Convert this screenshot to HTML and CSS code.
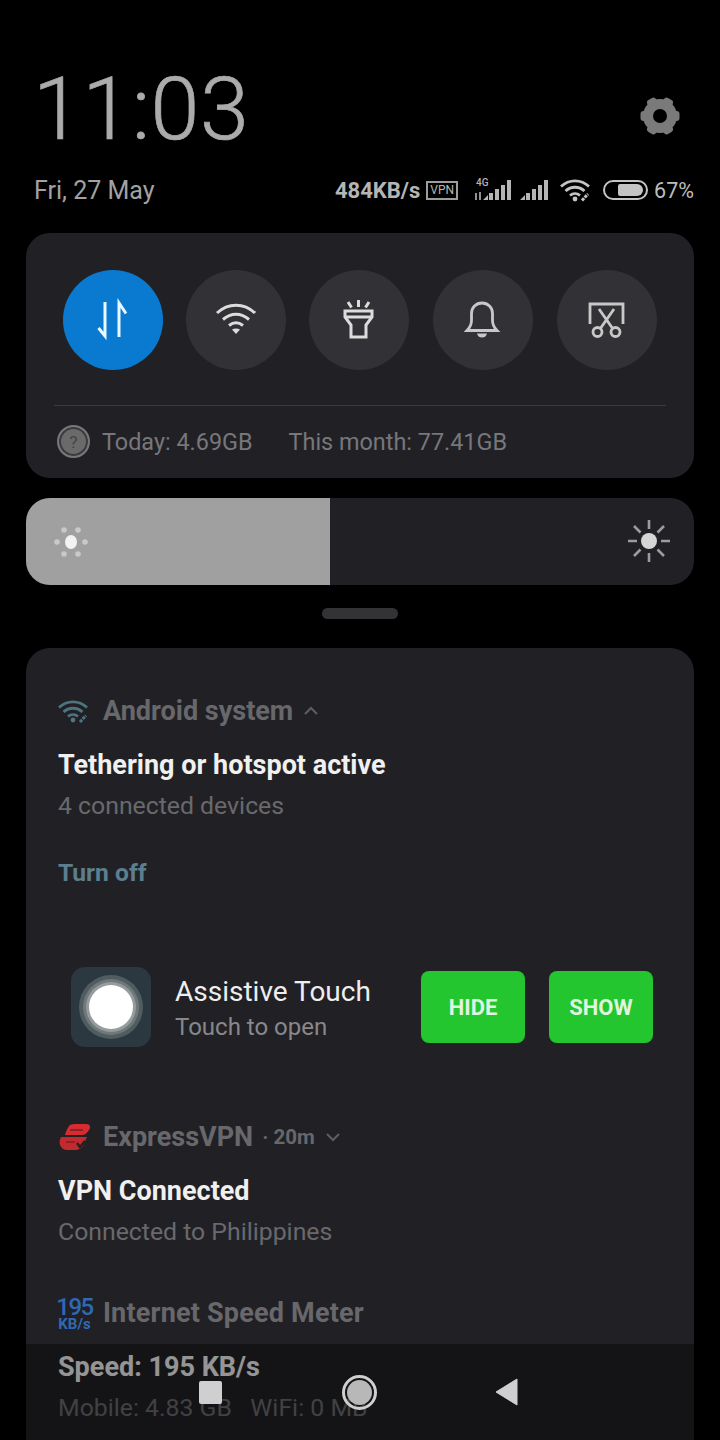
FILE: index.html
```html
<!DOCTYPE html>
<html lang="en">
<head>
    <meta charset="UTF-8">
    <meta name="viewport" content="width=device-width, initial-scale=1.0">
    <title>Notification shade</title>
    <link rel="stylesheet" href="styles.css">
</head>
<body>
    <div class="screen">
        <header class="top">
            <div class="clock-row">
                <div class="clock">11:03</div>
                <svg class="gear" viewBox="0 0 40 40">
                    <circle cx="20" cy="20" r="12.5" fill="none" stroke="#7a7a7a" stroke-width="9"/>
                    <g fill="#7a7a7a">
                        <rect x="15" y="0.500" width="10" height="39" rx="3" transform="rotate(30 20 20)"/>
                        <rect x="15" y="0.500" width="10" height="39" rx="3" transform="rotate(90 20 20)"/>
                        <rect x="15" y="0.500" width="10" height="39" rx="3" transform="rotate(150 20 20)"/>
                    </g>
                    <circle cx="20" cy="20" r="7" fill="#000"/>
                </svg>
            </div>
            <div class="status-row">
                <span class="date">Fri, 27 May</span>
                <div class="status">
                    <span class="speed">484KB/s</span>
                    <span class="vpn">VPN</span>
                    <svg class="signal first" width="38" height="24" viewBox="0 0 38 24">
                        <text x="2" y="8" class="tiny">4G</text>
                        <path d="M2 15v7M6 14v8" stroke="#b5b5b5" stroke-width="1.600"/>
                        <path d="M9 22l5-5v5zM15 22v-7h4v7zM21 22v-11h4v11zM27 22v-15h4v15zM33 22v-20h4v20z" fill="#b5b5b5"/>
                    </svg>
                    <svg class="signal" width="29" height="24" viewBox="0 0 29 24">
                        <path d="M0 22l5-5v5zM6 22v-7h4v7zM12 22v-11h4v11zM18 22v-15h4v15zM24 22v-20h4v20z" fill="#b5b5b5"/>
                    </svg>
                    <svg class="wifi-small" width="32" height="24" viewBox="0 0 32 24">
                        <g fill="none" stroke="#c4c4c4" stroke-width="2.800">
                            <path d="M1 8.500c8-7.500 20-7.500 28 0"/>
                            <path d="M5.500 13c5.500-5 13.500-5 19 0"/>
                            <path d="M10 17.500c3-2.500 7-2.500 10 0"/>
                        </g>
                        <circle cx="15" cy="21" r="2.400" fill="#c4c4c4"/>
                        <path d="M22 22l5-5.500" stroke="#000" stroke-width="5"/>
                        <path d="M22 22.500l6-6.500" stroke="#c4c4c4" stroke-width="3" stroke-dasharray="3 1"/>
                    </svg>
                    <div class="battery"><div class="battery-fill"></div></div>
                    <span class="percent">67%</span>
                </div>
            </div>
        </header>

        <section class="card quick">
            <div class="toggles">
                <div class="toggle on">
                    <svg width="44" height="44" viewBox="0 0 44 44" fill="none" stroke="#e8f8ff" stroke-width="3">
                        <path d="M14 4v34l-6.500-8"/>
                        <path d="M28 39v-34l7 10.500"/>
                    </svg>
                </div>
                <div class="toggle">
                    <svg width="44" height="44" viewBox="0 0 44 44" fill="none" stroke="#dcdcdc" stroke-width="3">
                        <path d="M3 15c11-10.500 27-10.500 38 0"/>
                        <path d="M9 21.500c8-7 18-7 26 0"/>
                        <path d="M15 27.500c4.500-3.500 9.500-3.500 14 0"/>
                        <path d="M22 36l-4-4.500c2.500-1.500 5.500-1.500 8 0z" fill="#dcdcdc" stroke="none"/>
                    </svg>
                </div>
                <div class="toggle">
                    <svg width="44" height="44" viewBox="0 0 44 44" fill="none" stroke="#dcdcdc" stroke-width="3">
                        <path d="M8 13h27v6l-6 8v12h-15v-12l-6-8z"/>
                        <path d="M8 19h27"/>
                        <path d="M21.500 2v7M11 4l3.500 5.500M32 4l-3.500 5.500"/>
                    </svg>
                </div>
                <div class="toggle">
                    <svg width="44" height="44" viewBox="0 0 44 44" fill="none" stroke="#c8c8c8" stroke-width="2.800">
                        <path d="M6 32.500c3-3 4.500-5.500 4.500-10v-7c0-6 4.500-10.500 10.500-10.500s10.500 4.500 10.500 10.500v7c0 4.500 1.500 7 4.500 10z"/>
                        <path d="M16 35.500h10c-1 3-2.500 4-5 4s-4-1-5-4z" fill="#c8c8c8" stroke="none"/>
                    </svg>
                </div>
                <div class="toggle">
                    <svg width="44" height="44" viewBox="0 0 44 44" fill="none" stroke="#c8c8c8" stroke-width="2.800">
                        <path d="M5 26v-20h33v20"/>
                        <path d="M14 11l14 20M29 11l-14 20"/>
                        <circle cx="12.500" cy="34" r="4.500"/>
                        <circle cx="30.500" cy="34" r="4.500"/>
                    </svg>
                </div>
            </div>
            <div class="usage">
                <span class="help"><span class="help-mark">?</span></span>
                <span class="today">Today: 4.69GB</span>
                <span>This month: 77.41GB</span>
            </div>
        </section>

        <section class="brightness">
            <div class="brightness-fill">
                <svg width="36" height="36" viewBox="0 0 36 36">
                    <ellipse cx="18" cy="18" rx="6" ry="7" fill="#f2f2f2"/>
                    <g fill="#c9c9c9">
                        <circle cx="11" cy="6" r="2.800"/><circle cx="25" cy="6" r="2.800"/>
                        <circle cx="4" cy="18" r="2.800"/><circle cx="32" cy="18" r="2.800"/>
                        <circle cx="11" cy="30" r="2.800"/><circle cx="25" cy="30" r="2.800"/>
                    </g>
                </svg>
            </div>
            <svg class="sun" width="44" height="44" viewBox="0 0 44 44">
                <circle cx="22" cy="22" r="8" fill="#d5d5d5"/>
                <path d="M22 1v9M22 34v9M1 22h9M34 22h9M7 7l6.500 6.500M30.500 30.500l6.500 6.500M37 7l-6.500 6.500M13.500 30.500l-6.500 6.500" stroke="#9c9c9c" stroke-width="2.600"/>
            </svg>
        </section>

        <div class="handle"></div>

        <section class="card notes">
            <div class="note">
                <div class="app-row">
                    <svg class="app-icon" width="32" height="24" viewBox="0 0 32 24">
                        <g fill="none" stroke="#4d7480" stroke-width="2.800">
                            <path d="M1 8.500c8-7.500 20-7.500 28 0"/>
                            <path d="M5.500 13c5.500-5 13.500-5 19 0"/>
                            <path d="M10 17.500c3-2.500 7-2.500 10 0"/>
                        </g>
                        <circle cx="15" cy="21" r="2.400" fill="#4d7480"/>
                        <path d="M22 23l6-6.500" stroke="#4d7480" stroke-width="3" stroke-dasharray="3 1"/>
                    </svg>
                    <span class="app-name">Android system</span>
                    <svg class="chevron" width="16" height="10" viewBox="0 0 16 10" fill="none" stroke="#5e5e62" stroke-width="2"><path d="M2 8l6-6 6 6"/></svg>
                </div>
                <div class="note-title">Tethering or hotspot active</div>
                <div class="note-text">4 connected devices</div>
                <div class="note-action">Turn off</div>
            </div>

            <div class="assist">
                <div class="assist-icon"><div class="assist-dot"></div></div>
                <div class="assist-text">
                    <div class="assist-title">Assistive Touch</div>
                    <div class="assist-sub">Touch to open</div>
                </div>
                <div class="btn">HIDE</div>
                <div class="btn">SHOW</div>
            </div>

            <div class="note vpn-note">
                <div class="app-row">
                    <svg class="app-icon express" width="33" height="28" viewBox="0 0 33 28">
                        <path d="M12 2c2-1 4-1 6-1h10c4 0 5 3 3 6s-4 5-7 5h-17c1-4 3-8 5-10z" fill="#d42c31"/>
                        <path d="M3 14h26l-3 7c-1 3-4 5-7 6h-10c-3 0-6-2-7-5s0-6 1-8z" fill="#c22a2e"/>
                        <path d="M12 7h13" stroke="#8f2226" stroke-width="2"/>
                        <path d="M8 19h9" stroke="#8f2226" stroke-width="2"/>
                        <path d="M19 20l3 4 5-6" fill="none" stroke="#212125" stroke-width="2.400"/>
                    </svg>
                    <span class="app-name">ExpressVPN</span>
                    <span class="app-time">· 20m</span>
                    <svg class="chevron" width="16" height="10" viewBox="0 0 16 10" fill="none" stroke="#5e5e62" stroke-width="2"><path d="M2 2l6 6 6-6"/></svg>
                </div>
                <div class="note-title">VPN Connected</div>
                <div class="note-text">Connected to Philippines</div>
            </div>

            <div class="note speed-note">
                <div class="app-row">
                    <div class="meter"><span class="meter-num">195</span><span class="meter-unit">KB/s</span></div>
                    <span class="app-name wide">Internet Speed Meter</span>
                </div>
                <div class="note-title speed-title">Speed: 195 KB/s</div>
                <div class="note-text">Mobile: 4.83 GB &nbsp; WiFi: 0 MB</div>
            </div>
        </section>

        <nav class="navbar">
            <div class="nav-square"></div>
            <div class="nav-home"><div class="nav-home-dot"></div></div>
            <svg width="24" height="28" viewBox="0 0 24 28"><path d="M23 1v26L2 14z" fill="#cfcfcf" stroke="#cfcfcf" stroke-linejoin="round"/></svg>
        </nav>
    </div>
</body>
</html>
```

FILE: styles.css
```css
* {
    box-sizing: border-box;
}
body {
    margin: 0;
    background: #000;
    font-family: 'Roboto', sans-serif;
}
.screen {
    position: relative;
    width: 720px;
    height: 1440px;
    overflow: hidden;
    background: #000;
    padding: 0 26px;
}
.top {
    height: 233px;
}
.clock-row {
    display: flex;
    justify-content: space-between;
    align-items: center;
    padding: 57px 14px 0 7px;
    height: 160px;
}
.clock {
    font-size: 88px;
    font-weight: 300;
    line-height: 103px;
    letter-spacing: .5px;
    color: #ababab;
    -webkit-text-stroke: .7px #ababab;
}
.gear {
    width: 40px;
    height: 40px;
    margin-top: 15px;
}
.status-row {
    display: flex;
    justify-content: space-between;
    align-items: center;
    padding: 0 0 0 8px;
    height: 58px;
    margin-top: 1px;
}
.date {
    font-size: 25px;
    color: #a2a2a2;
}
.status {
    display: flex;
    align-items: center;
    color: #c2c2c2;
}
.speed {
    font-size: 22px;
    font-weight: 700;
    color: #b5b5b5;
}
.vpn {
    border: 2px solid #9d9d9d;
    font-size: 12px;
    line-height: 15px;
    padding: 0 2px;
    margin-left: 6px;
    color: #b5b5b5;
}
.signal.first {
    margin-left: 16px;
}
.signal {
    margin-left: 8px;
}
.tiny {
    font-size: 10px;
    font-weight: 500;
    fill: #b5b5b5;
}
.wifi-small {
    margin-left: 11px;
}
.battery {
    width: 45px;
    height: 20px;
    margin-left: 11px;
    border: 2px solid #c4c4c4;
    border-radius: 10px;
    padding: 2px 3px;
    display: flex;
    justify-content: flex-end;
}
.battery-fill {
    width: 25px;
    background: #c4c4c4;
    border-radius: 2px 6px 6px 2px;
}
.percent {
    font-size: 21.500px;
    margin-left: 6px;
    color: #bdbdbd;
}
.card {
    background: #212125;
    border-radius: 24px;
}
.quick {
    height: 245px;
    padding: 37px 28px 0;
}
.toggles {
    display: flex;
    gap: 23px;
    padding: 0 9px;
    padding-bottom: 35px;
    border-bottom: 1px solid #3c3c40;
}
.toggle {
    width: 100px;
    height: 100px;
    border-radius: 50%;
    background: #323236;
    display: flex;
    align-items: center;
    justify-content: center;
    flex: none;
}
.toggle:nth-child(n+4) {
    margin-left: 1px;
}
.toggle.on {
    background: #0a7ad1;
}
.usage {
    display: flex;
    align-items: center;
    font-size: 23.400px;
    color: #77777b;
    padding: 19px 0 0 3px;
}
.help {
    width: 33px;
    height: 33px;
    border-radius: 50%;
    border: 2px solid #77777b;
    background: #6a6a6a;
    box-shadow: inset 0 0 0 2px #3a3a3d;
    display: flex;
    align-items: center;
    justify-content: center;
    margin-right: 12px;
}
.help-mark {
    font-size: 17px;
    color: #444;
}
.today {
    margin-right: 36px;
}
.brightness {
    display: flex;
    justify-content: space-between;
    align-items: center;
    height: 87px;
    margin-top: 20px;
    background: #212125;
    border-radius: 24px;
    overflow: hidden;
    padding-right: 23px;
}
.brightness-fill {
    width: 304px;
    height: 100%;
    background: #a0a0a0;
    display: flex;
    align-items: center;
    padding-left: 27px;
}
.sun {
    margin-bottom: 2px;
}
.handle {
    width: 76px;
    height: 11px;
    border-radius: 6px;
    background: #333336;
    margin: 23px auto 29px;
}
.notes {
    height: 900px;
    padding: 0 32px;
}
.note {
    padding-top: 48px;
}
.app-row {
    display: flex;
    align-items: center;
    height: 30px;
}
.app-icon {
    margin-right: 13px;
    flex: none;
}
.app-icon.express {
    margin-right: 12px;
}
.app-name {
    font-size: 27px;
    font-weight: 700;
    color: #68686c;
}
.app-name.wide {
    letter-spacing: .2px;
}
.app-time {
    font-size: 20.500px;
    font-weight: 700;
    color: #68686c;
    margin-left: 9px;
}
.chevron {
    margin-left: 10px;
}
.note-title {
    font-size: 27px;
    font-weight: 700;
    color: #f0f0f0;
    margin-top: 24px;
    line-height: 30px;
}
.note-text {
    font-size: 24.800px;
    color: #69696d;
    margin-top: 11px;
    line-height: 30px;
}
.note-action {
    font-size: 24.600px;
    font-weight: 700;
    color: #5c7f90;
    margin-top: 37px;
    line-height: 30px;
}
.assist {
    display: flex;
    align-items: center;
    margin-top: 79px;
    padding-left: 13px;
    height: 80px;
}
.assist-icon {
    width: 80px;
    height: 80px;
    border-radius: 14px;
    background: #2b3840;
    display: flex;
    align-items: center;
    justify-content: center;
    flex: none;
}
.assist-dot {
    width: 44px;
    height: 44px;
    border-radius: 50%;
    background: #fff;
    box-shadow: 0 0 0 3px #969c9c, 0 0 0 6px #6f797b, 0 0 0 10px #505c60;
}
.assist-text {
    margin-left: 24px;
    padding-top: 6px;
    width: 246px;
    flex: none;
}
.assist-title {
    font-size: 28px;
    color: #eee;
    line-height: 34px;
}
.assist-sub {
    font-size: 24px;
    color: #88888a;
    line-height: 36px;
}
.btn {
    width: 104px;
    height: 72px;
    border-radius: 8px;
    background: #23c62f;
    color: #dff5df;
    font-size: 22px;
    font-weight: 700;
    display: flex;
    align-items: center;
    justify-content: center;
    margin-right: 24px;
    flex: none;
}
.vpn-note {
    padding-top: 75px;
}
.speed-note {
    padding-top: 51px;
}
.meter {
    width: 33px;
    margin-right: 12px;
    display: flex;
    flex-direction: column;
    align-items: center;
    color: #2f69b5;
    font-weight: 500;
    flex: none;
}
.meter-num {
    font-size: 24px;
    line-height: 22px;
    letter-spacing: -1.500px;
}
.meter-unit {
    font-size: 15px;
    font-weight: 700;
    line-height: 12px;
}
.speed-title {
    margin-top: 24px;
}
.navbar {
    position: absolute;
    left: 0;
    right: 0;
    bottom: 0;
    height: 96px;
    background: rgba(0, 0, 0, .38);
    display: flex;
    align-items: center;
    padding-left: 199px;
}
.nav-square {
    width: 23px;
    height: 23px;
    border-radius: 2px;
    background: #cfcfcf;
}
.nav-home {
    width: 35px;
    height: 35px;
    border-radius: 50%;
    border: 3px solid #cfcfcf;
    margin-left: 120px;
    display: flex;
    align-items: center;
    justify-content: center;
}
.nav-home-dot {
    width: 25px;
    height: 25px;
    border-radius: 50%;
    background: #b8b8b8;
}
.navbar svg {
    margin-left: 117px;
}
```
